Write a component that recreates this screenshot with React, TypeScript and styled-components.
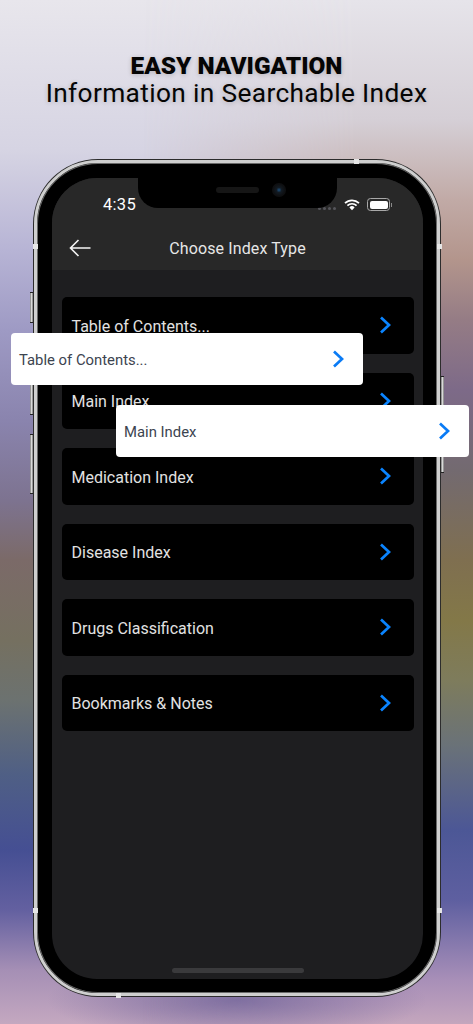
import styled, { createGlobalStyle } from "styled-components";

const GlobalStyle = createGlobalStyle`
  html, body {
    margin: 0;
    padding: 0;
    background: #8878a5;
  }
  * {
    box-sizing: border-box;
  }
`;

const menuItems = [
  "Table of Contents...",
  "Main Index",
  "Medication Index",
  "Disease Index",
  "Drugs Classification",
  "Bookmarks & Notes",
];

const Chevron = ({ color }: { color: string }) => (
  <ChevronSvg viewBox="0 0 12 18" fill="none" aria-hidden="true">
    <path
      d="M2 1.6 L10 9 L2 16.4"
      stroke={color}
      strokeWidth="2.7"
      strokeLinejoin="miter"
    />
  </ChevronSvg>
);

export default function App() {
  return (
    <>
      <GlobalStyle />
      <Page>
        <Heading>
          <HeadingStrong>EASY NAVIGATION</HeadingStrong>
          <HeadingLight>Information in Searchable Index</HeadingLight>
        </Heading>

        <Phone>
          <SideButton $side="left" $top={129} $height={31} />
          <SideButton $side="left" $top={197} $height={55} />
          <SideButton $side="left" $top={271} $height={60} />
          <SideButton $side="right" $top={213} $height={97} />

          <AntennaMark $x={317} $y={-4} />
          <AntennaMark $x={-4} $y={81} />
          <AntennaMark $x={400} $y={81} />
          <AntennaMark $x={-4} $y={745} />
          <AntennaMark $x={400} $y={745} />
          <AntennaMark $x={79} $y={830} />

          <Screen>
            <Notch>
              <Speaker />
              <Camera />
            </Notch>
            <TopBar>
              <StatusBar>
                <Clock>4:35</Clock>
                <StatusIcons>
                  <SignalDots>
                    <i />
                    <i />
                    <i />
                    <i />
                  </SignalDots>
                  <svg width="16" height="12" viewBox="0 0 16 12" aria-hidden="true">
                    <path
                      d="M1 4.2 A10 10 0 0 1 15 4.2 M3.4 6.6 A6.6 6.6 0 0 1 12.6 6.6"
                      stroke="#fff"
                      strokeWidth="1.7"
                      fill="none"
                    />
                    <path d="M5.4 8.4 A3.6 3.6 0 0 1 10.6 8.4 L8 11.2 Z" fill="#fff" />
                  </svg>
                  <Battery>
                    <BatteryFill />
                  </Battery>
                </StatusIcons>
              </StatusBar>
              <NavBar>
                <BackIcon viewBox="0 0 22 18" fill="none" aria-hidden="true">
                  <path
                    d="M21.5 9 H1.5 M9.5 1 L1.5 9 L9.5 17"
                    stroke="#f4f4f4"
                    strokeWidth="1.6"
                  />
                </BackIcon>
                <NavTitle>Choose Index Type</NavTitle>
              </NavBar>
            </TopBar>

            <MenuList>
              {menuItems.map((item) => (
                <MenuRow key={item}>
                  <MenuLabel>{item}</MenuLabel>
                  <Chevron color="#0a84ff" />
                </MenuRow>
              ))}
            </MenuList>

            <HomeIndicator />
          </Screen>
        </Phone>

        <FloatCard $left={11} $top={333} $width={352}>
          <FloatLabel>Table of Contents...</FloatLabel>
          <Chevron color="#0a7bf5" />
        </FloatCard>
        <FloatCard $left={116} $top={405} $width={353}>
          <FloatLabel>Main Index</FloatLabel>
          <Chevron color="#0a7bf5" />
        </FloatCard>
      </Page>
    </>
  );
}

const Page = styled.div`
  position: relative;
  width: 473px;
  height: 1024px;
  overflow: hidden;
  display: flex;
  flex-direction: column;
  align-items: flex-start;
  padding-top: 52px;
  font-family: Roboto, "Liberation Sans", sans-serif;
  background: radial-gradient(ellipse 190px 42px at 237px 1000px, rgba(118, 104, 156, 0.85), rgba(118, 104, 156, 0)),
    linear-gradient(
      to bottom,
      #e8e6ec 0,
      #d6d4e3 150px,
      #b7b4d5 250px,
      #9e9ac4 330px,
      #8a84ae 420px,
      #7d7390 500px,
      #7b6a68 560px,
      #757060 640px,
      #6c7270 700px,
      #4f5f85 775px,
      #454f93 850px,
      #6360a0 910px,
      #a58fb5 970px,
      #c4a8c0 1024px
    );

  &::before {
    content: "";
    position: absolute;
    inset: 0;
    background: radial-gradient(ellipse 190px 42px at 237px 1000px, rgba(118, 104, 156, 0.85), rgba(118, 104, 156, 0)),
      linear-gradient(
        to bottom,
        #e6e4ea 0,
        #d5cfd6 120px,
        #c1aaa6 200px,
        #b3958c 260px,
        #957c85 320px,
        #7d6a88 390px,
        #736a70 470px,
        #7f6f50 560px,
        #837848 620px,
        #7e7c5c 680px,
        #6a7278 745px,
        #4c5796 830px,
        #5e5fa0 900px,
        #a88fb8 980px,
        #c4a6bd 1024px
      );
    -webkit-mask-image: linear-gradient(to right, transparent 30%, #000 75%);
    mask-image: linear-gradient(to right, transparent 30%, #000 75%);
  }
`;

const Heading = styled.div`
  position: relative;
  width: 100%;
  display: flex;
  flex-direction: column;
  align-items: center;
  color: #050505;
  line-height: 28px;
  text-shadow: 0 1px 5px rgba(0, 0, 0, 0.2);
  white-space: nowrap;
`;

const HeadingStrong = styled.div`
  font-size: 24.4px;
  font-weight: 900;
`;

const HeadingLight = styled.div`
  margin-top: -1px;
  font-size: 26.3px;
  font-weight: 400;
  letter-spacing: 0.35px;
`;

const Phone = styled.div`
  position: relative;
  margin: 53px 0 0 34px;
  width: 406px;
  height: 836px;
  padding: 15px 14px 14px 15px;
  background: #000;
  border: 3px solid #cfcfcf;
  border-radius: 64px;
  box-shadow: 0 0 0 1px #2c2c2c, inset 0 0 0 1px #6a6a6a;
`;

const SideButton = styled.div<{ $side: "left" | "right"; $top: number; $height: number }>`
  position: absolute;
  ${(p) => (p.$side === "left" ? "left: -7px;" : "right: -7px;")}
  top: ${(p) => p.$top}px;
  width: 3px;
  height: ${(p) => p.$height}px;
  background: linear-gradient(to right, #777, #d8d8d8, #777);
  border-top: 1px solid #222;
  border-bottom: 1px solid #222;
`;

const AntennaMark = styled.div<{ $x: number; $y: number }>`
  position: absolute;
  left: ${(p) => p.$x}px;
  top: ${(p) => p.$y}px;
  width: 5px;
  height: 5px;
  background: #e6e6e6;
`;

const Screen = styled.div`
  position: relative;
  width: 100%;
  height: 100%;
  display: flex;
  flex-direction: column;
  background: #1e1e20;
  border-radius: 45px;
  overflow: hidden;
`;

const Notch = styled.div`
  position: absolute;
  left: 86px;
  top: 0;
  width: 199px;
  height: 30px;
  display: flex;
  justify-content: center;
  padding: 9px 0 0 27px;
  gap: 13px;
  background: #000;
  border-radius: 0 0 20px 20px;
`;

const Speaker = styled.div`
  width: 43px;
  height: 6px;
  background: #161616;
  border-radius: 3px;
`;

const Camera = styled.div`
  width: 14px;
  height: 14px;
  margin-top: -4px;
  border-radius: 50%;
  background: radial-gradient(circle, #1d4f7c 0, #121a22 26%, #0e0f11 60%);
`;

const TopBar = styled.div`
  height: 92px;
  flex-shrink: 0;
  background: #282828;
`;

const StatusBar = styled.div`
  height: 47px;
  display: flex;
  justify-content: space-between;
  align-items: flex-start;
  padding: 17px 33px 0 51px;
`;

const Clock = styled.span`
  font-size: 16.5px;
  line-height: 19px;
  font-weight: 400;
  letter-spacing: 0.3px;
  color: #fff;
`;

const StatusIcons = styled.div`
  display: flex;
  align-items: center;
  gap: 7px;
  margin-top: 3px;
`;

const SignalDots = styled.div`
  display: flex;
  gap: 2px;
  margin: 8px 1px 0 0;

  i {
    width: 3px;
    height: 3px;
    border-radius: 50%;
    background: #55555a;
  }
`;

const Battery = styled.div`
  position: relative;
  width: 23px;
  height: 13px;
  padding: 1.5px;
  border: 1px solid #a8a8a8;
  border-radius: 3.5px;

  &::after {
    content: "";
    position: absolute;
    right: -3px;
    top: 3.5px;
    width: 1px;
    height: 4px;
    background: #8a8a8a;
  }
`;

const BatteryFill = styled.div`
  width: 100%;
  height: 100%;
  background: #fff;
  border-radius: 2px;
`;

const NavBar = styled.div`
  position: relative;
  height: 45px;
  display: flex;
  align-items: center;
  justify-content: center;
`;

const BackIcon = styled.svg`
  position: absolute;
  left: 17px;
  top: 14px;
  width: 22px;
  height: 18px;
`;

const NavTitle = styled.span`
  padding-top: 2px;
  font-size: 16px;
  color: #e6e6e6;
  letter-spacing: 0.12px;
`;

const MenuList = styled.div`
  display: flex;
  flex-direction: column;
  gap: 19px;
  padding: 27px 9px 0 10px;
`;

const MenuRow = styled.div`
  height: 56.5px;
  display: flex;
  align-items: center;
  justify-content: space-between;
  padding: 0 23px 0 9.5px;
  background: #000;
  border-radius: 5px;
`;

const MenuLabel = styled.span`
  padding-top: 2px;
  font-size: 16px;
  color: #e2e2e2;
`;

const ChevronSvg = styled.svg`
  width: 12px;
  height: 18px;
  flex-shrink: 0;
`;

const HomeIndicator = styled.div`
  width: 132px;
  height: 5px;
  margin: auto auto 6px;
  border-radius: 3px;
  background: #3a3a3c;
`;

const FloatCard = styled.div<{ $left: number; $top: number; $width: number }>`
  position: absolute;
  left: ${(p) => p.$left}px;
  top: ${(p) => p.$top}px;
  width: ${(p) => p.$width}px;
  height: 52px;
  display: flex;
  align-items: center;
  justify-content: space-between;
  padding: 0 19px 0 8px;
  background: #fff;
  border-radius: 4px;
`;

const FloatLabel = styled.span`
  padding-top: 2px;
  font-size: 14.85px;
  color: #3c4450;
`;
